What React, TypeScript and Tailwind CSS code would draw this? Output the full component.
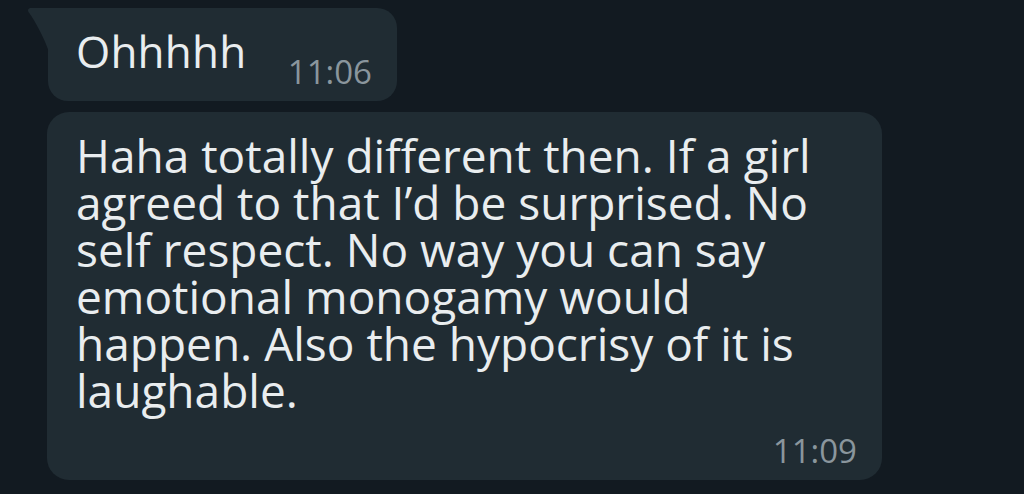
export default function App() {
  const lines = [
    "Haha totally different then. If a girl",
    "agreed to that I\u2019d be surprised. No",
    "self respect. No way you can say",
    "emotional monogamy would",
    "happen. Also the hypocrisy of it is",
    "laughable.",
  ];
  return (
    <div
      className="w-[1024px] h-[494px] bg-[#121a21] overflow-hidden pt-[8px] pl-[47px] flex flex-col gap-[11px]"
      style={{ fontFamily: "'Open Sans', Roboto, sans-serif" }}
    >
      <div className="relative ml-[1px] w-[349px] h-[93px] bg-[#202c33] rounded-[20px] rounded-tl-none flex justify-between pl-[28px] pr-[25px] pt-[20px]">
        <svg
          className="absolute left-[-21px] top-0"
          width="22"
          height="44"
          viewBox="0 0 22 44"
        >
          <path d="M3 0 H22 V44 C18 32 9 14 1.5 4 Q0 1 3 0 Z" fill="#202c33" />
        </svg>
        <div className="text-[44px] leading-[47px] text-[#e9edef] tracking-[0.2px]">Ohhhhh</div>
        <div className="text-[33px] leading-[33px] text-[#8a969d] mt-[27px]">11:06</div>
      </div>
      <div className="w-[835px] h-[368px] bg-[#202c33] rounded-[22px] pl-[29px] pr-[25px] pt-[20px] flex flex-col">
        <div className="text-[46px] leading-[47px] text-[#e9edef]">
          {lines.map((l, i) => (
            <div key={i} className="whitespace-nowrap">
              {l}
            </div>
          ))}
        </div>
        <div className="text-[33px] leading-[33px] text-[#8a969d] mt-[20px] self-end">11:09</div>
      </div>
    </div>
  );
}
